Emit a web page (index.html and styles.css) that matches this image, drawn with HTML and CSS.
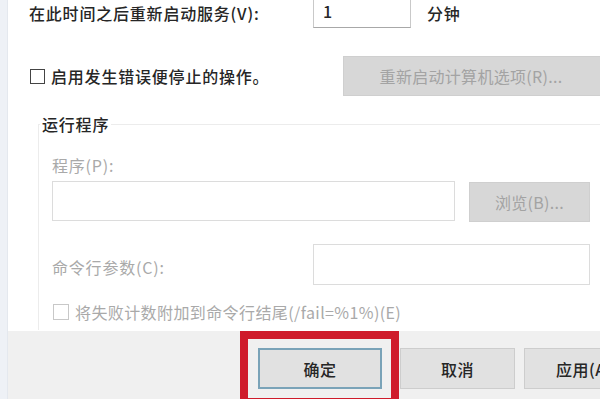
FILE: index.html
```html
<!DOCTYPE html>
<html lang="zh-CN">
<head>
<meta charset="utf-8">
<title>服务恢复</title>
<link rel="stylesheet" href="styles.css">
</head>
<body>
<div class="window">
  <div class="strip"></div>
  <div class="main">
    <div class="content">
      <div class="row-restart">
        <span class="label">在此时间之后重新启动服务(V):</span>
        <div class="input small">1</div>
        <span class="label unit">分钟</span>
      </div>
      <div class="row-check">
        <label class="check-line"><span class="box"></span><span class="label">启用发生错误便停止的操作。</span></label>
        <div class="btn disabled wide">重新启动计算机选项(R)...</div>
      </div>
      <fieldset class="group">
        <legend class="group-title">运行程序</legend>
        <div class="label muted field-label">程序(P):</div>
        <div class="row-program">
          <div class="input program"></div>
          <div class="btn disabled browse">浏览(B)...</div>
        </div>
        <div class="row-args">
          <span class="label muted">命令行参数(C):</span>
          <div class="input args"></div>
        </div>
        <label class="check-line faint"><span class="box"></span><span class="label muted">将失败计数附加到命令行结尾(/fail=%1%)(E)</span></label>
      </fieldset>
    </div>
    <div class="footer">
      <div class="btn ok">确定<span class="highlight"></span></div>
      <div class="btn cancel">取消</div>
      <div class="btn apply">应用(A)</div>
    </div>
  </div>
</div>
</body>
</html>
```
FILE: styles.css
```css
* { box-sizing: border-box; }
html, body { margin: 0; padding: 0; background: #fff; }
body {
  font-family: "Noto Sans CJK SC", "Noto Sans", "Liberation Sans", sans-serif;
  font-size: 16px;
  font-weight: 500;
  color: #262626;
}
.window {
  width: 600px;
  height: 399px;
  display: flex;
  overflow: hidden;
}
.strip {
  width: 8px;
  flex: none;
  background: #eef1f6;
  border-right: 1px solid #e4e8ee;
}
.main {
  flex: 1;
  display: flex;
  flex-direction: column;
  min-width: 0;
}
.content {
  flex: 1;
  background: #fff;
  padding-left: 21px;
  overflow: hidden;
}
.label {
  line-height: 20px;
  letter-spacing: 0.8px;
  white-space: nowrap;
}
.muted { color: #a9a9a9; font-weight: 400; }

.row-restart {
  display: flex;
  align-items: center;
  height: 28px;
}
.row-restart .label:first-child { width: 284px; flex: none; margin-top: -2px; }
.input {
  background: #fff;
  border: 1px solid #dcdcdc;
  flex: none;
}
.input.small {
  width: 98px;
  height: 28px;
  border-color: #c9c9c9;
  border-top: none;
  border-bottom-color: #a8a8a8;
  padding: 1px 0 0 9px;
  font-size: 16px;
  line-height: 20px;
}
.unit { margin-left: 16px; margin-top: -2px; }

.row-check {
  display: flex;
  align-items: center;
  margin-top: 28px;
  height: 40px;
}
.check-line {
  display: flex;
  align-items: center;
  gap: 6px;
}
.row-check .check-line { width: 313px; flex: none; margin-left: 1px; }
.box {
  width: 15px;
  height: 15px;
  border: 1.5px solid #444;
  background: #fff;
  flex: none;
}
.faint .box { border-color: #c8c8c8; width: 16px; height: 16px; }

.btn {
  display: flex;
  align-items: center;
  justify-content: center;
  white-space: nowrap;
  flex: none;
}
.btn.disabled {
  background: #d7d7d7;
  color: #a3a3a3;
  border: 1px solid #cfcfcf;
  letter-spacing: 0.3px;
  font-weight: 400;
}
.btn.wide { width: 270px; height: 40px; padding-right: 14px; }

.group {
  margin: 18px 0 0 9px;
  padding: 0 0 8px 13px;
  border: 1px solid #ececec;
  border-right: none;
  border-bottom: none;
  min-width: 0;
}
.group-title {
  margin-left: -12px;
  padding: 0 2px;
  line-height: 20px;
  letter-spacing: 0.8px;
  color: #262626;
}
.field-label { margin-top: 21px; }
.row-program {
  display: flex;
  margin-top: 6px;
  height: 41px;
}
.input.program { width: 403px; height: 40px; }
.browse { width: 121px; height: 40px; margin-left: 14px; margin-top: 1px; }

.row-args {
  display: flex;
  align-items: center;
  margin-top: 22px;
  height: 41px;
}
.row-args .label { width: 261px; flex: none; margin-top: 4px; }
.input.args { width: 277px; height: 41px; }

.group .check-line { margin-top: 17px; margin-left: 1px; }
.group .check-line .label { letter-spacing: 0.4px; }

.footer {
  height: 68px;
  flex: none;
  background: #f0f0f0;
  display: flex;
  padding-top: 17px;
  padding-left: 250px;
}
.footer .btn {
  height: 41px;
  background: #e1e1e1;
  border: 1px solid #cdcdcd;
  color: #262626;
  letter-spacing: 0.5px;
}
.btn.ok {
  position: relative;
  width: 124px;
  border: 2px solid #7aa3b8;
}
.btn.cancel { width: 115px; margin-left: 18px; }
.btn.apply { width: 120px; margin-left: 9px; }
.highlight {
  position: absolute;
  left: -20px;
  top: -19px;
  width: 159px;
  height: 75px;
  border: 8px solid #cf1b2b;
}
```
